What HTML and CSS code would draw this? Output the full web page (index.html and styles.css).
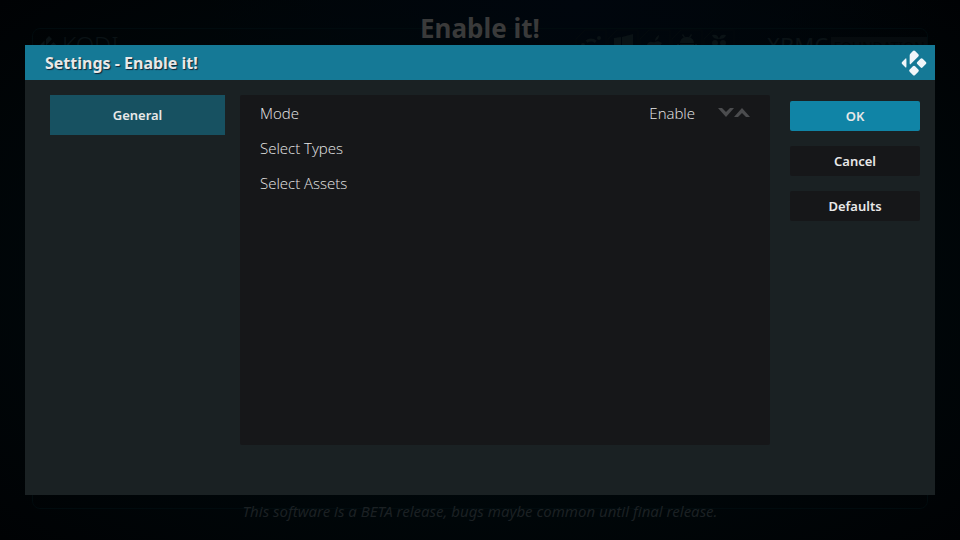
FILE: index.html
```html
<!DOCTYPE html>
<html lang="en">
<head>
    <meta charset="UTF-8">
    <meta name="viewport" content="width=device-width, initial-scale=1.0">
    <title>Settings - Enable it!</title>
    <link rel="stylesheet" href="styles.css">
</head>
<body>
    <div class="backdrop" aria-hidden="true">
        <svg class="mark" viewBox="0 0 24 24"><path d="M12 0l4 4-8 9V4zM6 6v12l-6-6zM18 8l5 5-5 5-5-5zM12 15l5 5-5 4-5-4z"/></svg>
        <span class="brand">KODI</span>
        <div class="platforms">
            <svg viewBox="0 0 32 32"><path class="frame" d="M1 32V10L10 1h21v31"/><circle cx="16" cy="18" r="7" fill="none" stroke="currentColor" stroke-width="3" stroke-dasharray="10 4"/><circle cx="24" cy="9" r="2"/><circle cx="8" cy="16" r="2"/></svg>
            <svg viewBox="0 0 32 32"><path class="frame" d="M1 32V10L10 1h21v31"/><path d="M7 9l7-1v8H7zM15 8l11-3v11H15zM7 18h7v7l-7-1zM15 18h11v9l-11-2z"/></svg>
            <svg viewBox="0 0 32 32"><path class="frame" d="M1 32V10L10 1h21v31"/><path d="M16 12c0-3 2-5 4-6 0 3-1 5-4 6zM9 14c3-3 5 0 7-1s4-1 7 1c-3 3-1 7 1 8-2 5-5 6-8 4-3 2-9 0-9-7 0-2 1-4 2-5z"/></svg>
            <svg viewBox="0 0 32 32"><path class="frame" d="M1 32V10L10 1h21v31"/><path d="M9 14c0-8 14-8 14 0zM9 15h14v9H9zM6 15h2v7H6zM24 15h2v7h-2zM11 6l1-1 2 3-1 1zM20 5l1 1-2 3-1-1z"/></svg>
            <svg viewBox="0 0 32 32"><path class="frame" d="M1 32V10L10 1h21v31"/><path d="M9 6c4-1 6 0 7 4-4 0-6-1-7-4zM23 6c-4-1-6 0-7 4 4 0 6-1 7-4z"/><circle cx="12" cy="14" r="3"/><circle cx="20" cy="14" r="3"/><circle cx="16" cy="20" r="3"/></svg>
        </div>
        <span class="xbmc">XBMC</span>
        <span class="foundation">FOUNDATION</span>
    </div>

    <h1 class="heading">Enable it!</h1>

    <div class="dialog" role="dialog" aria-labelledby="title">
        <div class="titlebar">
            <h2 id="title">Settings - Enable it!</h2>
            <svg class="logo" viewBox="0 0 24 24" aria-hidden="true">
                <path d="M11 1Q12 0 13 1L16 4Q17 5 16 6L9 13Q8 14 8 12V5Q8 4 9 3Z"/>
                <path d="M4 8Q5 7 5 9V15Q5 17 4 16L1 13Q0 12 1 11Z"/>
                <path d="M18 8Q19 7 20 8L23 11Q24 12 23 13L20 16Q19 17 18 16L15 13Q14 12 15 11Z"/>
                <path d="M11 15Q12 14 13 15L16 18Q17 19 16 20L13 23Q12 24 11 23L8 20Q7 19 8 18Z"/>
            </svg>
        </div>
        <div class="content">
            <div class="categories">
                <button class="category" type="button">General</button>
            </div>
            <div class="settings">
                <div class="setting">
                    <label for="mode">Mode</label>
                    <output id="mode">Enable</output>
                    <div class="spinner">
                        <button type="button" aria-label="Previous"><svg viewBox="0 0 16 9"><path d="M0 0h4l4 4 4-4h4L8 9z"/></svg></button>
                        <button type="button" aria-label="Next"><svg viewBox="0 0 16 9"><path d="M0 9h4l4-4 4 4h4L8 0z"/></svg></button>
                    </div>
                </div>
                <button class="setting" type="button">Select Types</button>
                <button class="setting" type="button">Select Assets</button>
            </div>
            <div class="actions">
                <button class="action focused" type="button">OK</button>
                <button class="action" type="button">Cancel</button>
                <button class="action" type="button">Defaults</button>
            </div>
        </div>
    </div>

    <p class="notice">This software is a BETA release, bugs maybe common until final release.</p>
</body>
</html>
```
FILE: styles.css
```css
* {
    box-sizing: border-box;
    padding: 0;
    margin: 0;
}

body {
    position: relative;
    display: flex;
    flex-direction: column;
    min-height: 100vh;
    padding: 0 25px;
    color: #e8e8e8;
    background: radial-gradient(ellipse at 60% 0, #00060d, transparent 45%),
        radial-gradient(ellipse at center, #00090c 40%, #000204 100%);
    font-family: 'Noto Sans', sans-serif;
}

button {
    border: 0;
    color: inherit;
    font: inherit;
    cursor: pointer;
}

svg {
    fill: currentColor;
}

/* faint artwork behind the dialog */
.backdrop {
    position: absolute;
    inset: 28px 32px 31px;
    display: flex;
    align-items: flex-start;
    border: 1px solid #010b0e;
    border-radius: 8px;
    color: #0a1215;
}

.mark {
    width: 18px;
    height: 18px;
    margin: 7px 0 0 7px;
}

.brand {
    margin-left: 4px;
    font-size: 24px;
    font-weight: 300;
    line-height: 32px;
}

.platforms {
    display: flex;
    margin-left: auto;
}

.platforms svg {
    width: 32px;
    height: 32px;
}

.platforms .frame {
    fill: none;
    stroke: #03090c;
}

.xbmc {
    width: 64px;
    margin-left: 32px;
    font-size: 22px;
    line-height: 32px;
}

.foundation {
    width: 96px;
    margin-top: 8px;
    color: #010507;
    background: #060b0e;
    font-size: 14px;
    line-height: 20px;
    text-align: center;
}

.heading {
    position: relative;
    height: 45px;
    padding-top: 10px;
    color: #3a3a3a;
    font-size: 26px;
    line-height: 36px;
    text-align: center;
}

.dialog {
    position: relative;
    flex: 1;
    display: flex;
    flex-direction: column;
    background: #1a2123;
}

.titlebar {
    display: flex;
    align-items: center;
    justify-content: space-between;
    height: 35px;
    padding: 0 8px 0 20px;
    background: #157996;
}

.titlebar h2 {
    font-size: 16px;
    line-height: 24px;
    text-shadow: 1px 1px 1px #123;
}

.logo {
    width: 26px;
    height: 26px;
    color: #f0f6fa;
}

.content {
    flex: 1;
    display: flex;
    padding: 15px 15px 50px 25px;
}

.categories {
    width: 175px;
    margin-right: 15px;
}

.category {
    width: 100%;
    height: 40px;
    background: #175161;
    font-size: 13px;
    font-weight: 600;
}

.settings {
    flex: 1;
    margin-right: 20px;
    border-radius: 2px;
    background: #161719;
}

.setting {
    display: flex;
    align-items: center;
    width: 100%;
    height: 35px;
    padding: 0 20px;
    background: none;
    font-family: 'Open Sans', 'Noto Sans', sans-serif;
    font-size: 15px;
    font-weight: 300;
    text-align: left;
}

.setting output {
    margin-left: auto;
}

.spinner {
    display: flex;
    margin-left: 23px;
}

.spinner button {
    width: 16px;
    height: 16px;
    color: #4b4c4e;
    background: none;
}

.spinner svg {
    display: block;
    width: 16px;
    height: 9px;
    margin: auto;
}

.actions {
    display: flex;
    flex-direction: column;
    gap: 15px;
    width: 130px;
    padding-top: 6px;
}

.action {
    height: 30px;
    border-radius: 2px;
    background: #161719;
    font-size: 13px;
    font-weight: 600;
}

.action.focused {
    background: #1084a6;
}

.notice {
    position: relative;
    height: 45px;
    padding-top: 4px;
    color: #1b2023;
    font-size: 15px;
    font-style: italic;
    line-height: 24px;
    text-align: center;
}
```
